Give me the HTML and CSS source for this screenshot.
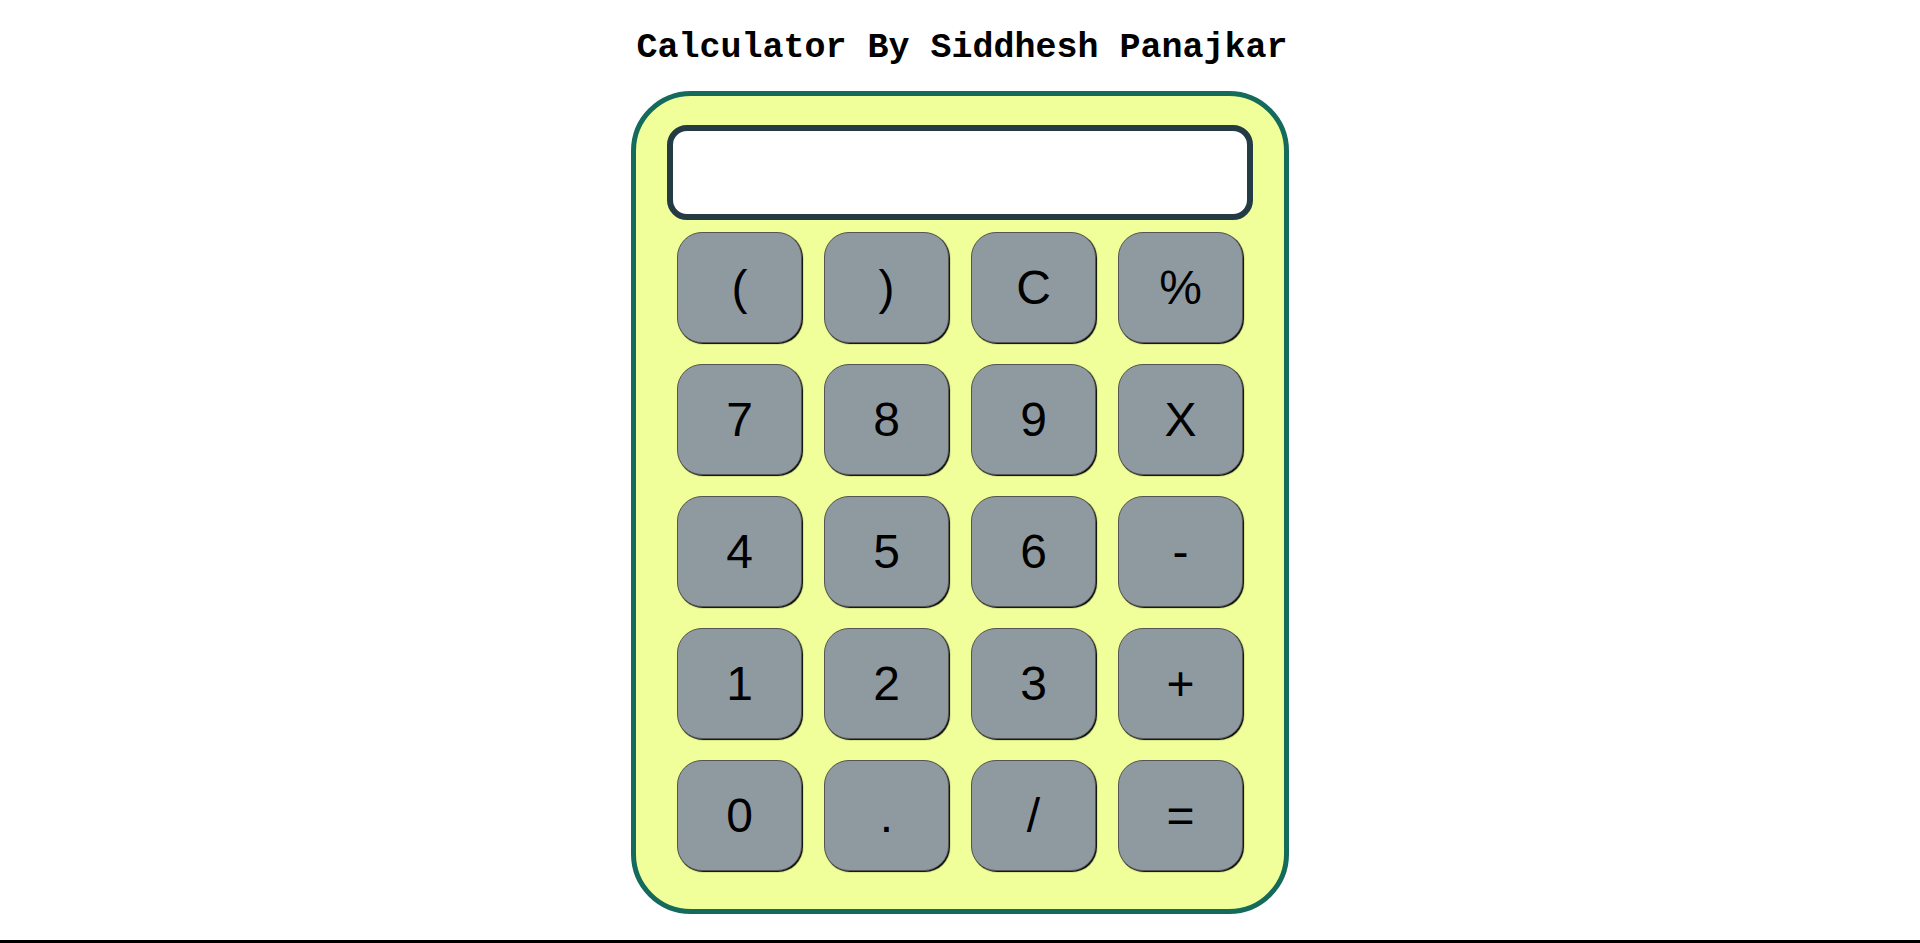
FILE: index.html
```html
<!DOCTYPE html>
<html>
<head>
<meta charset="utf-8">
<title>Calculator</title>
<link rel="stylesheet" href="styles.css">
</head>
<body>
<div class="page">
  <h1 class="title">Calculator By Siddhesh Panajkar</h1>
  <div class="calc">
    <div class="display"></div>
    <div class="keys">
      <button class="key">(</button>
      <button class="key">)</button>
      <button class="key">C</button>
      <button class="key">%</button>
      <button class="key">7</button>
      <button class="key">8</button>
      <button class="key">9</button>
      <button class="key">X</button>
      <button class="key">4</button>
      <button class="key">5</button>
      <button class="key">6</button>
      <button class="key">-</button>
      <button class="key">1</button>
      <button class="key">2</button>
      <button class="key">3</button>
      <button class="key">+</button>
      <button class="key">0</button>
      <button class="key">.</button>
      <button class="key">/</button>
      <button class="key">=</button>
    </div>
  </div>
</div>
</body>
</html>
```

FILE: styles.css
```css
html, body {
  margin: 0;
  padding: 0;
  background: #ffffff;
}

.page {
  height: 940px;
  border-bottom: 3px solid #000000;
  display: flex;
  flex-direction: column;
  align-items: center;
  overflow: hidden;
}

.title {
  margin: 33px 0 0 4px;
  height: 30px;
  font-family: "Liberation Mono", "Courier New", monospace;
  font-weight: bold;
  font-size: 35px;
  line-height: 30px;
  color: #000000;
}

.calc {
  margin-top: 28px;
  width: 648px;
  height: 813px;
  border: 5px solid #146a5b;
  border-radius: 60px;
  background: #f0ff99;
  display: flex;
  flex-direction: column;
  align-items: center;
}

.display {
  margin-top: 29px;
  width: 574px;
  height: 83px;
  border: 6px solid #243a45;
  border-radius: 20px;
  background: #ffffff;
  flex: none;
}

.keys {
  margin-top: 12px;
  display: grid;
  grid-template-columns: repeat(4, 125px);
  grid-auto-rows: 111px;
  column-gap: 22px;
  row-gap: 21px;
}

.key {
  box-sizing: border-box;
  margin: 0;
  padding: 0;
  background: #8f9aa0;
  border: 1px solid #555555;
  border-radius: 25px;
  box-shadow: 1px 1px 1px #000000;
  font-family: "Liberation Sans", Arial, sans-serif;
  font-size: 48px;
  color: #000000;
  display: flex;
  align-items: center;
  justify-content: center;
}
```
